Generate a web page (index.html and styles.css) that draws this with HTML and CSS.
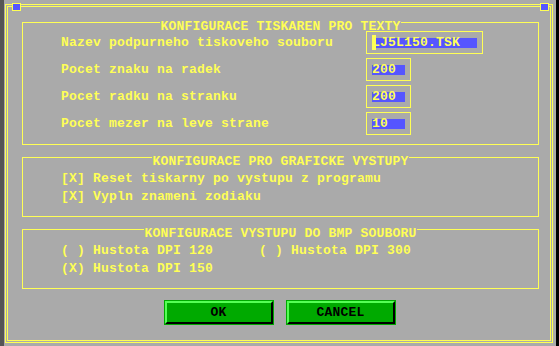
FILE: index.html
```html
<!DOCTYPE html>
<html lang="cs">
<head>
    <meta charset="UTF-8">
    <meta name="viewport" content="width=device-width, initial-scale=1.0">
    <title>Konfigurace</title>
    <link rel="stylesheet" href="styles.css">
</head>
<body>
    <div class="screen">
        <div class="edge-left"></div>
        <div class="dialog">
            <span class="corner corner-left"></span>
            <span class="corner corner-right"></span>
            <div class="frame">
                <div class="inner">
                    <section class="group group-text">
                        <div class="group-title"><span class="rule"></span><span class="title-text">KONFIGURACE TISKAREN PRO TEXTY</span><span class="rule"></span></div>
                        <div class="fields">
                            <div class="label">Nazev podpurneho tiskoveho souboru</div>
                            <div class="input"><span class="value wide"><span class="cursor">L</span>J5L150.TSK</span></div>

                            <div class="label">Pocet znaku na radek</div>
                            <div class="input"><span class="value">200</span></div>

                            <div class="label">Pocet radku na stranku</div>
                            <div class="input"><span class="value">200</span></div>

                            <div class="label">Pocet mezer na leve strane</div>
                            <div class="input"><span class="value">10</span></div>
                        </div>
                    </section>

                    <section class="group">
                        <div class="group-title"><span class="rule"></span><span class="title-text">KONFIGURACE PRO GRAFICKE VYSTUPY</span><span class="rule"></span></div>
                        <div class="options">
                            <div class="option">[X] Reset tiskarny po vystupu z programu</div>
                            <div class="option">[X] Vypln znameni zodiaku</div>
                        </div>
                    </section>

                    <section class="group">
                        <div class="group-title"><span class="rule"></span><span class="title-text">KONFIGURACE VYSTUPU DO BMP SOUBORU</span><span class="rule"></span></div>
                        <div class="options options-grid">
                            <div class="option">( ) Hustota DPI 120</div>
                            <div class="option">( ) Hustota DPI 300</div>
                            <div class="option">(X) Hustota DPI 150</div>
                        </div>
                    </section>

                    <div class="buttons">
                        <button class="btn">OK</button>
                        <button class="btn">CANCEL</button>
                    </div>
                </div>
            </div>
        </div>
        <div class="edge-right"></div>
    </div>
</body>
</html>
```

FILE: styles.css
```css
body {
    margin: 0;
    background-color: #aaaaaa;
    font-family: "Liberation Mono", "DejaVu Sans Mono", monospace;
    font-weight: bold;
    font-size: 13px;
    letter-spacing: 0.2px;
    color: #ffff55;
}
.screen {
    display: flex;
    width: 559px;
    height: 346px;
    overflow: hidden;
}
.edge-left {
    width: 4px;
    background-color: #555555;
}
.edge-right {
    width: 3px;
    background-color: #000;
}
.dialog {
    position: relative;
    width: 552px;
    padding: 4px 3px 3px 1px;
    box-sizing: border-box;
    background-color: #aaaaaa;
}
.corner {
    position: absolute;
    top: 3px;
    width: 9px;
    height: 8px;
    box-sizing: border-box;
    border: 1px solid #ffff55;
    background-color: #5555ff;
}
.corner-left {
    left: 8px;
}
.corner-right {
    left: 536px;
}
.frame {
    height: 100%;
    box-sizing: border-box;
    border: 1px solid #ffff55;
    padding: 1px;
}
.inner {
    height: 100%;
    box-sizing: border-box;
    border: 1px solid #ffff55;
    padding: 15px 11px 0 14px;
}
.group {
    border: 1px solid #ffff55;
    border-top: none;
    padding: 0 0 9px 38px;
    margin-bottom: 12px;
}
.group-title {
    display: flex;
    align-items: flex-start;
    height: 9px;
    margin-left: -39px;
    margin-right: -1px;
}
.rule {
    flex: 1;
    border-top: 1px solid #ffff55;
}
.title-text {
    line-height: 9px;
    white-space: pre;
}
.fields {
    display: grid;
    grid-template-columns: 305px auto;
    row-gap: 4px;
    align-items: center;
}
.label {
    line-height: 10px;
}
.input {
    justify-self: start;
    border: 1px solid #ffff55;
    padding: 6px 5px 5px 5px;
}
.value {
    display: block;
    width: 33px;
    height: 10px;
    line-height: 10px;
    background-color: #5555ff;
    white-space: pre;
}
.value.wide {
    width: 105px;
}
.cursor {
    background: linear-gradient(to right, #ffff55 45%, transparent 45%);
}
.options {
    padding-top: 4px;
}
.options-grid {
    display: grid;
    grid-template-columns: 198px auto;
}
.option {
    line-height: 18px;
    white-space: pre;
}
.group + .group {
    padding-bottom: 10px;
}
.buttons {
    display: flex;
    justify-content: center;
    gap: 14px;
    margin-top: 6px;
    padding-right: 2px;
}
.btn {
    width: 108px;
    height: 23px;
    box-sizing: border-box;
    border: 2px solid;
    border-color: #55ff55 #000 #000 #55ff55;
    box-shadow: 0 0 0 1px #00aa00;
    background-color: #00aa00;
    color: #000;
    font-family: inherit;
    font-weight: bold;
    font-size: 13px;
    letter-spacing: 0.2px;
    padding: 0;
    cursor: pointer;
}
```
